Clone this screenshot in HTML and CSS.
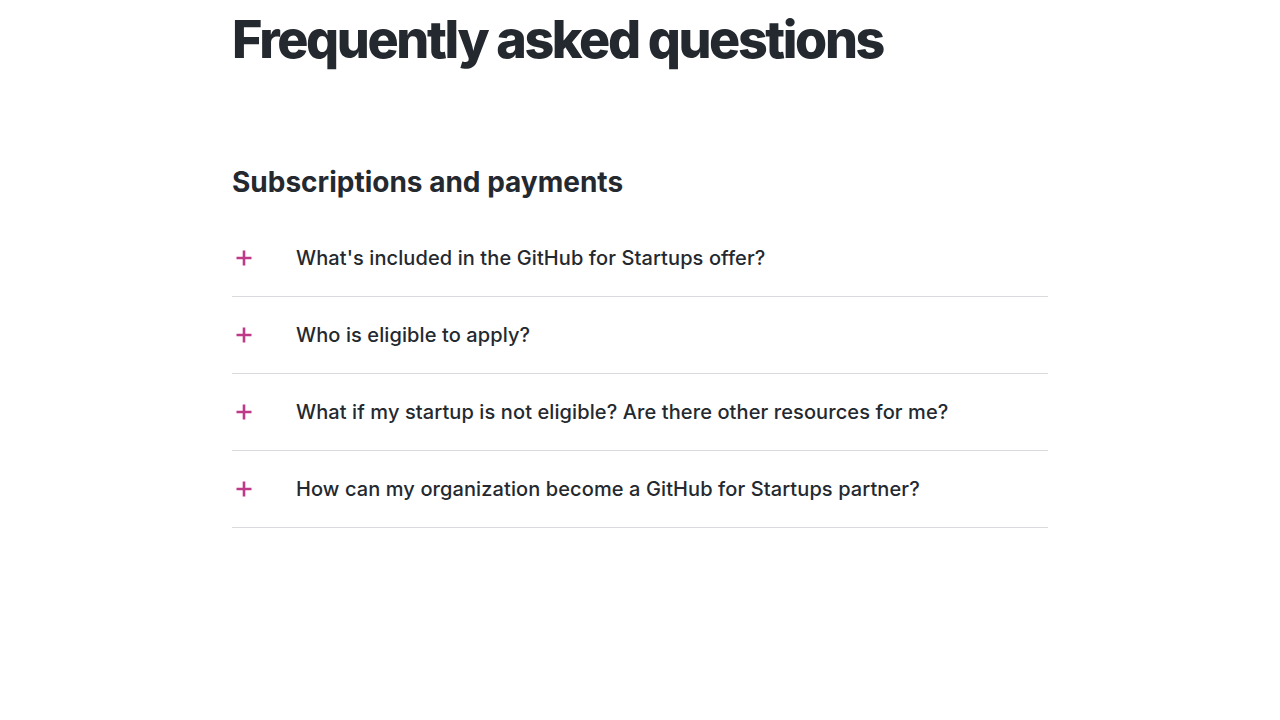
FILE: index.html
```html
<!DOCTYPE html>
<html lang="en">
<head>
<meta charset="utf-8">
<link rel="stylesheet" href="styles.css">
<title>FAQ</title>
</head>
<body>
<main class="faq">
  <h1 class="faq-title">Frequently asked questions</h1>
  <section class="faq-group">
    <h2 class="faq-group-title">Subscriptions and payments</h2>
    <div class="faq-list">
      <div class="faq-item">
        <span class="faq-icon"><svg width="24" height="24" viewBox="0 0 24 24"><path d="M12 4.5v15M4.5 12h15" stroke="#bf3989" stroke-width="2.6" fill="none"/></svg></span>
        <span class="faq-q">What's included in the GitHub for Startups offer?</span>
      </div>
      <div class="faq-item">
        <span class="faq-icon"><svg width="24" height="24" viewBox="0 0 24 24"><path d="M12 4.5v15M4.5 12h15" stroke="#bf3989" stroke-width="2.6" fill="none"/></svg></span>
        <span class="faq-q">Who is eligible to apply?</span>
      </div>
      <div class="faq-item">
        <span class="faq-icon"><svg width="24" height="24" viewBox="0 0 24 24"><path d="M12 4.5v15M4.5 12h15" stroke="#bf3989" stroke-width="2.6" fill="none"/></svg></span>
        <span class="faq-q">What if my startup is not eligible? Are there other resources for me?</span>
      </div>
      <div class="faq-item">
        <span class="faq-icon"><svg width="24" height="24" viewBox="0 0 24 24"><path d="M12 4.5v15M4.5 12h15" stroke="#bf3989" stroke-width="2.6" fill="none"/></svg></span>
        <span class="faq-q">How can my organization become a GitHub for Startups partner?</span>
      </div>
    </div>
  </section>
</main>
</body>
</html>
```
FILE: styles.css
```css
html, body {
  margin: 0;
  padding: 0;
  background: #ffffff;
}
body {
  font-family: Inter, "Noto Sans", sans-serif;
  color: #24292f;
}
.faq {
  width: 816px;
  margin: 0 auto;
  padding-top: 8px;
}
.faq-title {
  margin: 0;
  font-size: 52px;
  line-height: 64px;
  font-weight: 800;
  letter-spacing: -2.4px;
}
.faq-group {
  margin-top: 92px;
}
.faq-group-title {
  margin: 0;
  font-size: 28px;
  line-height: 36px;
  font-weight: 700;
  letter-spacing: 0;
}
.faq-list {
  margin-top: 20px;
}
.faq-item {
  display: flex;
  align-items: center;
  gap: 40px;
  height: 76px;
  border-bottom: 1px solid #d8dadd;
}
.faq-icon {
  display: flex;
  width: 24px;
  height: 24px;
}
.faq-q {
  font-size: 20px;
  line-height: 28px;
  font-weight: 500;
  letter-spacing: 0.1px;
}
```
